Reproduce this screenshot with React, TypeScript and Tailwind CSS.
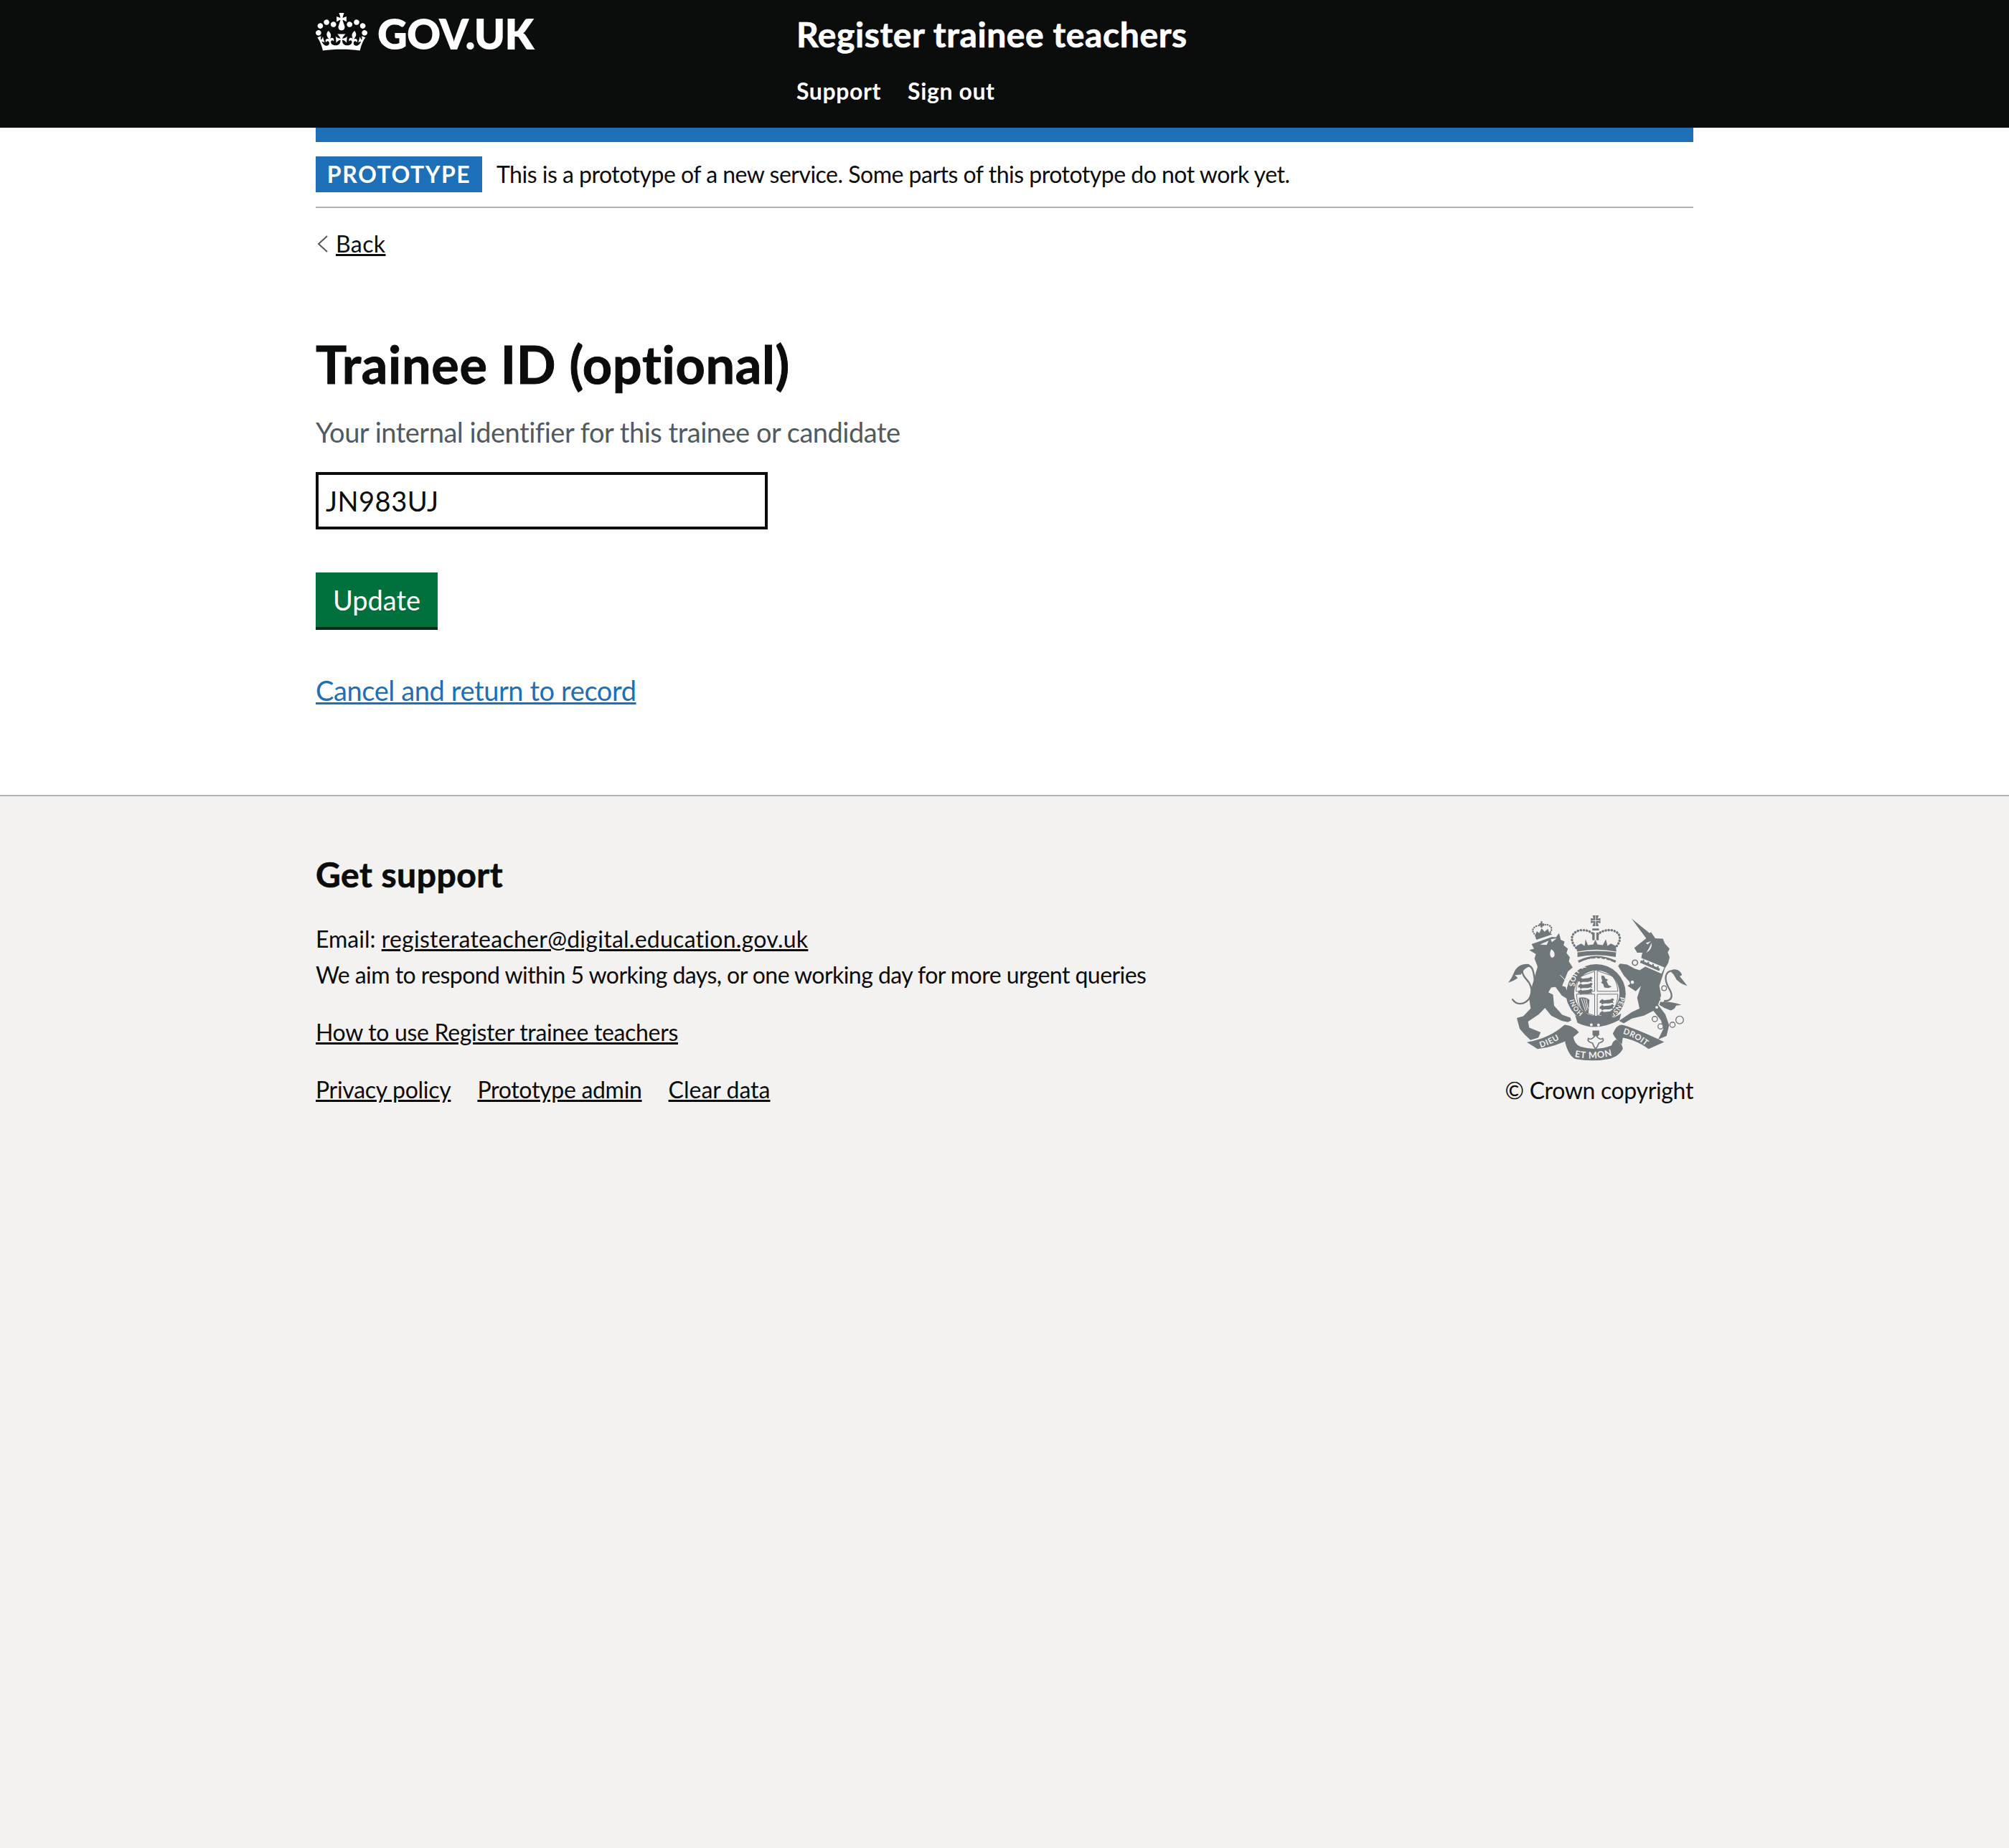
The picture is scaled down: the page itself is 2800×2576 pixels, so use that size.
const CROWN = "M25 30.2c3.5 1.5 7.7-.2 9.1-3.7 1.5-3.6-.2-7.8-3.9-9.2-3.6-1.4-7.6.3-9.1 3.9-1.4 3.5.3 7.5 3.9 9zM9 39.5c3.6 1.5 7.8-.2 9.2-3.7 1.5-3.6-.2-7.8-3.9-9.1-3.6-1.5-7.6.2-9.1 3.8-1.4 3.5.3 7.5 3.8 9zM4.4 57.2c3.5 1.5 7.7-.2 9.1-3.8 1.5-3.6-.2-7.7-3.9-9.1-3.5-1.5-7.6.3-9.1 3.8-1.4 3.5.3 7.6 3.9 9.1zm38.3-21.4c3.5 1.5 7.7-.2 9.1-3.8 1.5-3.6-.2-7.7-3.9-9.1-3.6-1.5-7.6.3-9.1 3.8-1.3 3.6.4 7.7 3.9 9.1zm64.4-5.6c-3.6 1.5-7.8-.2-9.1-3.7-1.5-3.6.2-7.8 3.8-9.2 3.6-1.4 7.7.3 9.2 3.9 1.3 3.5-.4 7.5-3.9 9zm15.9 9.3c-3.6 1.5-7.7-.2-9.1-3.7-1.5-3.6.2-7.8 3.7-9.1 3.6-1.5 7.7.2 9.2 3.8 1.5 3.5-.3 7.5-3.8 9zm4.7 17.7c-3.6 1.5-7.8-.2-9.2-3.8-1.5-3.6.2-7.7 3.9-9.1 3.6-1.5 7.7.3 9.2 3.8 1.3 3.5-.4 7.6-3.9 9.1zM89.3 35.8c-3.6 1.5-7.8-.2-9.2-3.8-1.4-3.6.2-7.7 3.9-9.1 3.6-1.5 7.7.3 9.2 3.8 1.4 3.6-.3 7.7-3.9 9.1zM69.7 17.7l8.9 4.7V9.3l-8.9 2.8c-.2-.3-.5-.6-.9-.9L72.4 0H59.6l3.5 11.2c-.3.3-.6.5-.9.9l-8.8-2.8v13.1l8.8-4.7c.3.3.6.7.9.9l-5 15.4v.1c-.2.8-.4 1.6-.4 2.4 0 4.1 3.1 7.5 7 8.1h.2c.3 0 .7.1 1 .1.4 0 .7 0 1-.1h.2c4-.6 7.1-4.1 7.1-8.1 0-.8-.1-1.7-.4-2.4V34l-5.1-15.4c.4-.2.7-.6 1-.9zM66 92.8c16.9 0 32.8 1.1 47.1 3.2 4-16.9 8.9-26.7 14-33.5l-9.6-3.4c1 4.9 1.1 7.2 0 10.2-1.5-1.4-3-4.3-4.2-8.7L108.6 76c2.8-2 5-3.2 7.5-3.3-4.4 9.4-10 11.9-13.6 11.2-4.3-.8-6.3-4.6-5.6-7.9 1-4.7 5.7-5.9 8-.5 4.3-8.7-3-11.4-7.6-8.8 7.1-7.2 7.9-13.5 2.1-21.1-8 6.1-8.1 12.3-4.5 20.8-4.7-5.4-12.1-2.5-9.5 6.2 3.4-5.2 7.9-2 7.2 3.1-.6 4.3-6.4 7.8-13.5 7.2-10.3-.9-10.9-8-11.2-13.8 2.5-.5 7.1 1.8 11 7.3L80.2 60c-4.1 4.4-8 5.3-12.3 5.4 1.4-4.4 8-11.6 8-11.6H55.5s6.4 7.2 7.9 11.6c-4.2-.1-8-1-12.3-5.4l1.4 16.4c3.9-5.5 8.5-7.7 10.9-7.3-.3 5.8-.9 12.8-11.1 13.8-7.2.6-12.9-2.9-13.5-7.2-.7-5 3.8-8.3 7.1-3.1 2.7-8.7-4.6-11.6-9.4-6.2 3.7-8.5 3.6-14.7-4.6-20.8-5.8 7.6-5 13.9 2.2 21.1-4.7-2.6-11.9.1-7.7 8.8 2.3-5.5 7.1-4.2 8.1.5.7 3.3-1.3 7.1-5.7 7.9-3.5.7-9-1.8-13.5-11.2 2.5.1 4.7 1.3 7.5 3.3l-4.7-15.4c-1.2 4.4-2.7 7.2-4.3 8.7-1.1-3-.9-5.3 0-10.2l-9.5 3.4c5 6.9 9.9 16.7 14 33.5 14.8-2.1 30.8-3.2 47.7-3.2z";

function Crest() {
  const g = "#6f777b";
  const bg = "#f3f2f1";
  const f = "Lato, sans-serif";
  const id = "c";
  const lions = (x: number, y: number) => (
    <g fill={g}>
      {[0, 25, 50].map((d) => (
        <path key={d} d={`M${x} ${y + d} l10 -8 l6 5 l28 -3 l8 -5 l8 5 l-6 8 l4 9 l-8 -3 l-10 3 l-22 0 l-10 4 l-2 -6 l-8 -1z`} />
      ))}
    </g>
  );
  return (
    <svg viewBox="70 50 755 610" width={252} height={203} className="block">
      <defs>
        <path id={`${id}g1`} d="M350 348 A98 98 0 1 1 541 378" />
        <path id={`${id}g2`} d="M541 390 A98 98 0 0 1 470 472" />
        <path id={`${id}g3`} d="M386 458 A98 98 0 0 1 345 385" />
        <path id={`${id}r1`} d="M208 604 Q270 585 328 540" />
        <path id={`${id}r2`} d="M552 546 Q605 558 665 612" />
        <path id={`${id}r3`} d="M350 642 Q435 660 535 630" />
      </defs>
      {/* Lion tail */}
      <path fill="none" stroke={g} strokeWidth="7" strokeLinecap="round" d="M185 335 C178 300 182 262 150 258 C122 262 126 295 150 320 C178 350 178 400 135 418 C115 424 100 416 90 402" />
      <path fill={g} d="M160 254 Q112 250 96 290 Q88 312 72 332 Q95 325 112 312 L100 300 L125 298 Q138 270 162 264 Z" />
      {/* Lion */}
      <path fill={g} d="M170 170 L205 158 L255 140 L272 142 L285 124 L292 152 L308 160 L304 175 L322 190 L316 208 L330 225 L326 243 L342 268 L322 285 L316 300 L298 345 L312 350 L318 365 L335 378 L340 402 L322 420 L316 398 L296 385 L270 350 L252 352 L240 372 L260 382 L264 428 L298 466 L332 478 L336 490 L322 497 L296 492 L252 470 L226 438 L200 465 L155 495 L160 520 L208 540 L198 562 L165 572 L140 548 L120 525 L108 480 L135 472 L166 440 L160 400 L172 345 L195 265 L182 230 L188 212 L160 195 L180 190 Z" />
      <path fill={bg} d="M252 192 q16 8 14 26 q-4 12 -14 8 q-10 -12 0 -34z M205 172 l36 -16 l-8 18z M250 150 l25 -4 l-20 16z" />
      <path stroke={bg} strokeWidth="3" d="M290 300 L340 352" />
      {/* Lion crown */}
      <path fill="none" stroke={g} strokeWidth="7" strokeDasharray="1 9" strokeLinecap="round" d="M188 135 Q160 108 192 94 Q206 90 212 96 Q226 84 244 92 Q262 104 246 124" />
      <path fill={g} d="M184 134 L192 116 L202 124 L212 104 L224 118 L238 106 L244 122 L256 130 L190 152 Z M201 84 h7 v-9 h7 v9 h7 v7 h-7 v10 h-7 v-10 h-7z" />
      {/* Unicorn tail */}
      <path fill="none" stroke={g} strokeWidth="7" strokeLinecap="round" d="M700 400 C745 420 772 400 745 355 C725 320 725 285 760 282 C785 284 772 310 780 318" />
      <path fill={g} d="M760 277 Q790 272 800 300 L790 305 Q806 325 822 345 Q785 335 772 310 Q765 295 755 288 Z M710 410 Q760 412 798 425 L775 428 Q770 445 752 448 Q725 440 705 425Z" />
      {/* Unicorn */}
      <path fill={g} d="M588 63 L664 124 L670 120 L688 146 L720 148 L728 168 L748 190 L740 205 L748 225 L742 250 L728 272 L722 292 L705 345 L712 385 L700 425 L730 465 L746 510 L735 555 L700 570 L722 525 L712 490 L680 450 L640 470 L590 482 L556 502 L536 492 L590 455 L622 440 L612 395 L628 345 L606 368 L572 345 L586 335 L556 302 L532 262 L540 252 L570 256 L600 272 L622 280 L650 262 L628 232 L634 206 L612 206 L600 186 L650 146 Z" />
      <path fill={bg} d="M648 166 l22 -8 l-14 14z M672 165 q6 25 -22 42 q14 -20 22 -42z" />
      <path fill={bg} d="M624 226 L726 268 L714 294 L618 252 Z" />
      <path fill={g} d="M628 238 l8 3 l0 -7 l6 3 l0 7 l14 6 l0 -7 l6 3 l0 7 l14 6 l0 -7 l6 3 l0 7 l14 6 l0 -7 l6 3 l0 7 l6 3 l-4 9 l-80 -35z" />
      <circle cx="603" cy="248" r="11" fill={bg} stroke={g} strokeWidth="5" />
      <circle cx="592" cy="330" r="9" fill={bg} stroke={g} strokeWidth="4" />
      <circle cx="725" cy="355" r="10" fill={bg} stroke={g} strokeWidth="4" />
      <circle cx="717" cy="405" r="8" fill={bg} />
      <circle cx="694" cy="435" r="6" fill={bg} />
      <circle cx="686" cy="484" r="11" fill={bg} stroke={g} strokeWidth="4" />
      <circle cx="710" cy="515" r="11" fill={bg} stroke={g} strokeWidth="4" />
      <circle cx="760" cy="508" r="11" fill={bg} stroke={g} strokeWidth="4" />
      <circle cx="790" cy="488" r="16" fill={bg} stroke={g} strokeWidth="4" />
      {/* Crown */}
      <path fill={g} d="M425 50 h26 l-5 14 l12 -3 v22 l-12 -4 l5 16 h-26 l5 -16 l-12 4 v-22 l12 3 z" />
      <path stroke={bg} strokeWidth="3" d="M438 52 v46 M420 72 h36" />
      <rect x="424" y="105" width="28" height="8" fill={g} />
      <rect x="424" y="122" width="10" height="32" fill={g} />
      <rect x="441" y="122" width="10" height="32" fill={g} />
      <path fill="none" stroke={g} strokeWidth="10" strokeDasharray="1 11.5" strokeLinecap="round" d="M366 195 C325 160 332 120 375 112 C395 110 415 115 430 130 M447 130 C462 115 485 110 505 112 C548 120 552 160 510 195" />
      <path fill={g} d="M358 178 L378 168 L392 178 L396 150 L406 175 L428 172 L437 152 L446 172 L468 175 L481 150 L488 178 L502 168 L522 178 L525 202 Q440 185 360 202 Z" />
      <path fill={g} d="M362 205 Q440 192 524 205 L522 224 Q440 208 362 224Z" />
      <path fill="none" stroke={g} strokeWidth="10" d="M366 244 Q440 205 522 244" />
      {/* Shield + garter */}
      <circle cx="440" cy="378" r="124" fill={g} />
      <circle cx="443" cy="376" r="95" fill={bg} />
      <text fill={bg} fontFamily={f} fontWeight="700" fontSize="31"><textPath href={`#${id}g1`}>SOIT QUI MAL Y</textPath></text>
      <text fill={bg} fontFamily={f} fontWeight="700" fontSize="28"><textPath href={`#${id}g2`}>PENSE</textPath></text>
      <text fill={bg} fontFamily={f} fontWeight="700" fontSize="27"><textPath href={`#${id}g3`}>HONI</textPath></text>
      <path fill="none" stroke={g} strokeWidth="3" d="M356 368 Q356 330 378 305 L434 284 L434 368 Z M445 282 L508 304 Q530 330 531 368 L445 368 Z M358 380 L434 380 L434 470 L382 452 Q360 425 358 380 Z M445 380 L531 380 Q530 425 508 452 L445 470 Z" />
      {lions(366, 318)}
      {lions(456, 408)}
      <path fill={g} d="M462 302 l12 2 l4 10 l12 6 l-6 6 l8 16 l14 6 l-14 6 l-18 -2 l-4 -14 l-10 -6 l6 -6 l-4 -16z" />
      <path fill={g} d="M368 395 Q395 390 412 404 L408 462 Q390 460 378 440 Q368 420 368 395Z" />
      <path stroke={bg} strokeWidth="3" d="M378 398 L396 452 M388 398 L402 448 M398 400 L406 440" />
      {/* Belt */}
      <path fill={g} d="M352 468 Q440 525 545 462 L538 488 Q440 540 362 500Z" />
      <circle cx="420" cy="508" r="6" fill={bg} />
      <circle cx="450" cy="509" r="6" fill={bg} />
      {/* Fleur */}
      <path fill={g} d="M425 532 h28 v18 l-6 6 h-16 l-6 -6z" />
      <path fill={bg} stroke={g} strokeWidth="5" d="M436 553 Q420 575 408 565 Q400 578 425 585 Q430 600 438 610 Q446 600 452 585 Q476 578 468 565 Q455 575 440 553z" />
      {/* Ribbon */}
      <path fill={g} d="M150 581 Q245 565 308 508 Q345 510 368 540 L342 562 Q270 600 195 610 Z" />
      <path fill={g} d="M510 545 Q530 500 555 510 Q620 530 725 580 L660 610 Q610 572 552 562 L548 590 Q525 575 510 545Z" />
      <path fill={g} d="M310 580 Q318 555 345 560 Q350 590 375 600 Q445 620 505 595 Q510 575 525 570 Q552 590 552 610 Q535 640 500 650 Q430 665 355 652 Q325 640 310 580Z" />
      <text fill={bg} fontFamily={f} fontWeight="700" fontSize="34" letterSpacing="2"><textPath href={`#${id}r1`}>DIEU</textPath></text>
      <text fill={bg} fontFamily={f} fontWeight="700" fontSize="34" letterSpacing="1"><textPath href={`#${id}r2`}>DROIT</textPath></text>
      <text fill={bg} fontFamily={f} fontWeight="700" fontSize="38" letterSpacing="2"><textPath href={`#${id}r3`}>ET MON</textPath></text>
    </svg>
  );
}

export default function App() {
  return (
    <div className="min-h-[2576px] flex flex-col bg-[#f3f2f1] text-[#0b0c0c] font-['Lato',sans-serif] text-[32px] leading-[50px]">
      <header className="h-[178px] bg-[#0b0c0c] text-white">
        <div className="w-[1920px] mx-auto flex">
          <div className="w-[670px] pt-[18px] flex items-start">
            <svg viewBox="0 0 132 97" width="72" height="53" fill="currentColor" className="mr-[14px] shrink-0">
              <path d={CROWN} />
            </svg>
            <span className="text-[58px] leading-[60px] font-extrabold tracking-[-0.8px] -mt-[1px]">GOV.UK</span>
          </div>
          <div className="pt-[18px]">
            <div className="text-[48px] leading-[60px] font-bold tracking-[0.6px] [-webkit-text-stroke:0.7px_#ffffff]">Register trainee teachers</div>
            <nav className="flex gap-[37px] mt-[29px] text-[32px] leading-[40px] font-bold tracking-[0.6px]">
              <a>Support</a>
              <a>Sign out</a>
            </nav>
          </div>
        </div>
      </header>
      <div className="bg-white">
        <div className="w-[1920px] mx-auto">
          <div className="h-[20px] bg-[#1d70b8]" />
          <div className="h-[92px] border-b-2 border-[#b1b4b6] pt-[20px] flex items-start">
            <span className="h-[50px] w-[232px] bg-[#1d70b8] text-white font-bold text-[32px] leading-[50px] tracking-[1.5px] text-center">PROTOTYPE</span>
            <span className="ml-[20px] leading-[50px] tracking-[-0.5px]">This is a prototype of a new service. Some parts of this prototype do not work yet.</span>
          </div>
          <div className="pt-[24px] flex items-center h-[76px]">
            <svg viewBox="0 0 18 26" width="18" height="26" fill="none" stroke="#505a5f" strokeWidth="2" className="mr-[10px]">
              <path d="M16 2 L4 13 L16 24" />
            </svg>
            <a className="underline leading-[40px] tracking-[0.4px]">Back</a>
          </div>
          <h1 className="mt-[101px] text-[72px] leading-[80px] font-bold tracking-[0.7px] [-webkit-text-stroke:1px_#0b0c0c]">Trainee ID (optional)</h1>
          <div className="mt-[30px] text-[38px] leading-[50px] text-[#505a5f] tracking-[-0.48px]">Your internal identifier for this trainee or candidate</div>
          <input readOnly value="JN983UJ" className="block mt-[31px] w-[630px] h-[80px] border-4 border-[#0b0c0c] px-[10px] text-[38px] tracking-[0.5px] text-[#0b0c0c] outline-none bg-white" />
          <button className="block mt-[60px] w-[170px] h-[80px] bg-[#00703c] border-b-4 border-[#002d18] text-white text-[38px] leading-[50px]">Update</button>
          <a className="block mt-[59px] text-[38px] leading-[50px] text-[#1d70b8] underline tracking-[-0.4px]">Cancel and return to record</a>
          <div className="h-[121px]" />
        </div>
      </div>
      <footer className="flex-1 border-t-2 border-[#b1b4b6]">
        <div className="w-[1920px] mx-auto flex justify-between pt-[79px]">
          <div>
            <h2 className="text-[48px] leading-[60px] font-bold tracking-[0.5px] [-webkit-text-stroke:0.7px_#0b0c0c]">Get support</h2>
            <p className="mt-[35px]">Email: <a className="underline tracking-[0.26px]">registerateacher@digital.education.gov.uk</a></p>
            <p className="tracking-[-0.55px]">We aim to respond within 5 working days, or one working day for more urgent queries</p>
            <p className="mt-[30px] tracking-[-0.32px]"><a className="underline">How to use Register trainee teachers</a></p>
            <div className="mt-[30px] flex gap-[37px]">
              <a className="underline tracking-[-0.3px]">Privacy policy</a>
              <a className="underline tracking-[-0.3px]">Prototype admin</a>
              <a className="underline">Clear data</a>
            </div>
          </div>
          <div className="flex flex-col items-end pt-[87px]">
            <div className="pr-[7px]"><Crest /></div>
            <div className="mt-[16px] tracking-[-0.35px]">© Crown copyright</div>
          </div>
        </div>
      </footer>
    </div>
  );
}
